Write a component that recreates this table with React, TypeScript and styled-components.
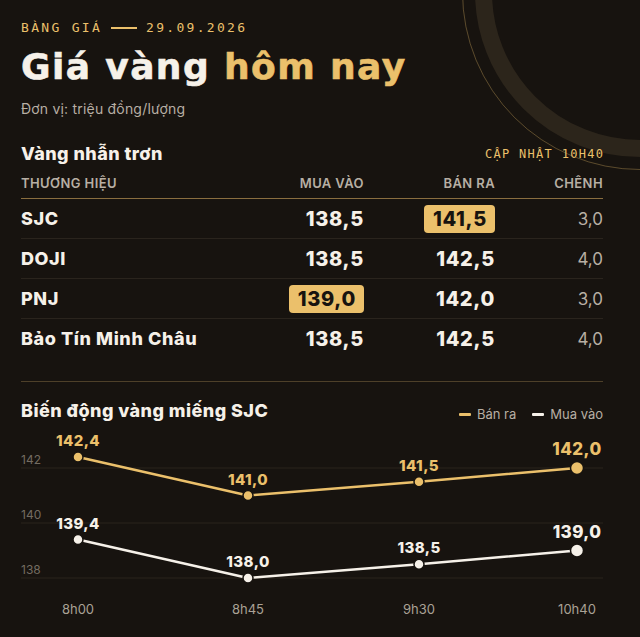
import React from "react";
import styled, { createGlobalStyle } from "styled-components";

const GlobalStyle = createGlobalStyle`
  html, body { margin: 0; padding: 0; background: #17130f; height: 100%; overflow: hidden; }
  body { font-family: Inter, "Noto Sans", sans-serif; color: #f6f1e9; }
  * { box-sizing: border-box; }
`;

const GOLD = "#ebc06b";
const WHITE = "#f6f1e9";
const GRAY = "#b7afa4";
const MONO = `"DejaVu Sans Mono", "Liberation Mono", monospace`;

const Page = styled.div`
  position: relative;
  width: 640px;
  height: 637px;
  overflow: hidden;
  padding: 20px 37px 0 21px;
  background: #17130f;
`;

const Ring = styled.div`
  position: absolute;
  left: ${640 - 178}px;
  top: ${-8 - 178}px;
  width: 356px;
  height: 356px;
  border-radius: 50%;
  border: 1px solid rgba(235, 192, 107, 0.32);
  pointer-events: none;
  &::after {
    content: "";
    position: absolute;
    left: ${178 - 165 - 1}px;
    top: ${178 - 165 - 1}px;
    width: 330px;
    height: 330px;
    border-radius: 50%;
    border: 17px solid #2c251b;
    box-sizing: border-box;
  }
`;

const Content = styled.div`
  position: relative;
  z-index: 1;
`;

const Eyebrow = styled.div`
  display: flex;
  align-items: center;
  gap: 9px;
  font-family: ${MONO};
  font-size: 13px;
  line-height: 16px;
  letter-spacing: 2.3px;
  color: ${GOLD};
`;

const Dash = styled.span`
  display: inline-block;
  width: 26px;
  height: 1.5px;
  background: ${GOLD};
`;

const Heading = styled.h1`
  margin: 10px 0 0;
  font-family: "DejaVu Sans", Inter, sans-serif;
  font-size: 36px;
  line-height: 42px;
  font-weight: 700;
  letter-spacing: 1.4px;
  color: ${WHITE};
  -webkit-text-stroke: 0.6px ${WHITE};
`;

const Accent = styled.span`
  color: ${GOLD};
  -webkit-text-stroke: 0.6px ${GOLD};
`;

const Sub = styled.div`
  margin-top: 12px;
  font-size: 14px;
  line-height: 18px;
  letter-spacing: 0.2px;
  color: ${GRAY};
`;

const SectionRow = styled.div<{ $mt: number }>`
  margin-top: ${(p) => p.$mt}px;
  display: flex;
  justify-content: space-between;
  align-items: center;
  height: 22px;
`;

const SectionTitle = styled.h2`
  margin: 0;
  font-size: 18px;
  line-height: 22px;
  font-weight: 800;
  letter-spacing: 0.45px;
  color: ${WHITE};
`;

const Updated = styled.span`
  font-family: ${MONO};
  font-size: 12px;
  letter-spacing: 1.3px;
  color: ${GOLD};
  margin-right: -1.3px;
`;

const Grid = styled.div`
  display: grid;
  grid-template-columns: 1fr 120px 131px 108px;
  align-items: center;
`;

const HeadRow = styled(Grid)`
  margin-top: 10px;
  padding-bottom: 7px;
  border-bottom: 1.5px solid #8a6e3f;
  font-size: 13px;
  line-height: 16px;
  font-weight: 600;
  letter-spacing: 0.4px;
  color: ${GRAY};
`;

const HeadCell = styled.div<{ $right?: boolean }>`
  text-align: ${(p) => (p.$right ? "right" : "left")};
`;

const Row = styled(Grid)<{ $last?: boolean }>`
  height: 40px;
  border-bottom: 1px solid ${(p) => (p.$last ? "transparent" : "#2a241d")};
`;

const Brand = styled.div`
  font-size: 18px;
  font-weight: 800;
  letter-spacing: 0.6px;
  color: ${WHITE};
`;

const Num = styled.div`
  text-align: right;
  font-size: 20px;
  font-weight: 800;
  letter-spacing: 0.7px;
  color: ${WHITE};
`;

const Badge = styled.span`
  display: inline-block;
  padding: 2px 8px 2px 9px;
  line-height: 24px;
  border-radius: 4px;
  background: ${GOLD};
  color: #17130f;
`;

const Diff = styled.div`
  text-align: right;
  font-size: 17px;
  font-weight: 400;
  color: ${GRAY};
`;

const Divider = styled.div`
  margin-top: 22px;
  height: 1px;
  background: #4e4029;
`;

const ChartHead = styled.div`
  margin-top: 16px;
  display: flex;
  justify-content: space-between;
  align-items: flex-end;
  height: 24px;
`;

const Legend = styled.div`
  display: flex;
  align-items: center;
  gap: 16px;
`;

const LegendItem = styled.span`
  display: flex;
  align-items: center;
  gap: 6px;
  font-size: 13px;
  color: ${GRAY};
`;

const Swatch = styled.span<{ $c: string }>`
  display: inline-block;
  width: 12px;
  height: 3px;
  border-radius: 1px;
  background: ${(p) => p.$c};
`;

const ChartSvg = styled.svg`
  display: block;
  margin-top: 4px;
  overflow: visible;
`;

const rows = [
  { brand: "SJC", buy: "138,5", sell: "141,5", diff: "3,0", hl: "sell" },
  { brand: "DOJI", buy: "138,5", sell: "142,5", diff: "4,0", hl: "" },
  { brand: "PNJ", buy: "139,0", sell: "142,0", diff: "3,0", hl: "buy" },
  { brand: "Bảo Tín Minh Châu", buy: "138,5", sell: "142,5", diff: "4,0", hl: "" },
];

const xs = [57, 227, 398, 556];
const times = ["8h00", "8h45", "9h30", "10h40"];
const sellVals = [142.4, 141.0, 141.5, 142.0];
const buyVals = [139.4, 138.0, 138.5, 139.0];
const yOf = (v: number) => 42 + (142 - v) * 27.5;
const fmt = (v: number) => v.toFixed(1).replace(".", ",");

function Series({ vals, color }: { vals: number[]; color: string }) {
  const pts = vals.map((v, i) => `${xs[i]},${yOf(v)}`).join(" ");
  return (
    <g>
      <polyline points={pts} fill="none" stroke={color} strokeWidth={2.5} strokeLinejoin="round" />
      {vals.map((v, i) => {
        const last = i === vals.length - 1;
        const y = yOf(v);
        return (
          <g key={i}>
            <circle cx={xs[i]} cy={y} r={last ? 6.5 : 5} fill={color} stroke="#17130f" strokeWidth={1.5} />
            <text
              x={xs[i]}
              y={y - (last ? 13 : 11)}
              textAnchor="middle"
              fill={color}
              fontFamily="Inter, sans-serif"
              fontWeight={800}
              fontSize={last ? 17 : 15}
              letterSpacing={0.4}
            >
              {fmt(v)}
            </text>
          </g>
        );
      })}
    </g>
  );
}

function Chart() {
  const grid = [
    { y: 42, label: "142" },
    { y: 97, label: "140" },
    { y: 152, label: "138" },
  ];
  return (
    <ChartSvg width={582} height={200} viewBox="0 0 582 200">
      {grid.map((g) => (
        <g key={g.label}>
          <line x1={0} x2={582} y1={g.y} y2={g.y} stroke="#2a241d" strokeWidth={1} />
          <text x={0} y={g.y - 4} fill="#746c61" fontFamily="Inter, sans-serif" fontSize={12}>
            {g.label}
          </text>
        </g>
      ))}
      <Series vals={sellVals} color={GOLD} />
      <Series vals={buyVals} color={WHITE} />
      {times.map((t, i) => (
        <text
          key={t}
          x={xs[i]}
          y={188}
          textAnchor="middle"
          fill="#aaa296"
          fontFamily="Inter, sans-serif"
          fontSize={13}
        >
          {t}
        </text>
      ))}
    </ChartSvg>
  );
}

export default function App() {
  return (
    <Page>
      <GlobalStyle />
      <Ring />
      <Content>
        <Eyebrow>
          <span>BÀNG GIÁ</span>
          <Dash />
          <span>29.09.2026</span>
        </Eyebrow>
        <Heading>
          Giá vàng <Accent>hôm nay</Accent>
        </Heading>
        <Sub>Đơn vị: triệu đồng/lượng</Sub>

        <SectionRow $mt={25}>
          <SectionTitle>Vàng nhẫn trơn</SectionTitle>
          <Updated>CẬP NHẬT 10H40</Updated>
        </SectionRow>

        <HeadRow>
          <HeadCell>THƯƠNG HIỆU</HeadCell>
          <HeadCell $right>MUA VÀO</HeadCell>
          <HeadCell $right>BÁN RA</HeadCell>
          <HeadCell $right>CHÊNH</HeadCell>
        </HeadRow>
        {rows.map((r, i) => (
          <Row key={r.brand} $last={i === rows.length - 1}>
            <Brand>{r.brand}</Brand>
            <Num>{r.hl === "buy" ? <Badge>{r.buy}</Badge> : r.buy}</Num>
            <Num>{r.hl === "sell" ? <Badge>{r.sell}</Badge> : r.sell}</Num>
            <Diff>{r.diff}</Diff>
          </Row>
        ))}

        <Divider />

        <ChartHead>
          <SectionTitle>Biến động vàng miếng SJC</SectionTitle>
          <Legend>
            <LegendItem>
              <Swatch $c={GOLD} />
              Bán ra
            </LegendItem>
            <LegendItem>
              <Swatch $c={WHITE} />
              Mua vào
            </LegendItem>
          </Legend>
        </ChartHead>
        <Chart />
      </Content>
    </Page>
  );
}
